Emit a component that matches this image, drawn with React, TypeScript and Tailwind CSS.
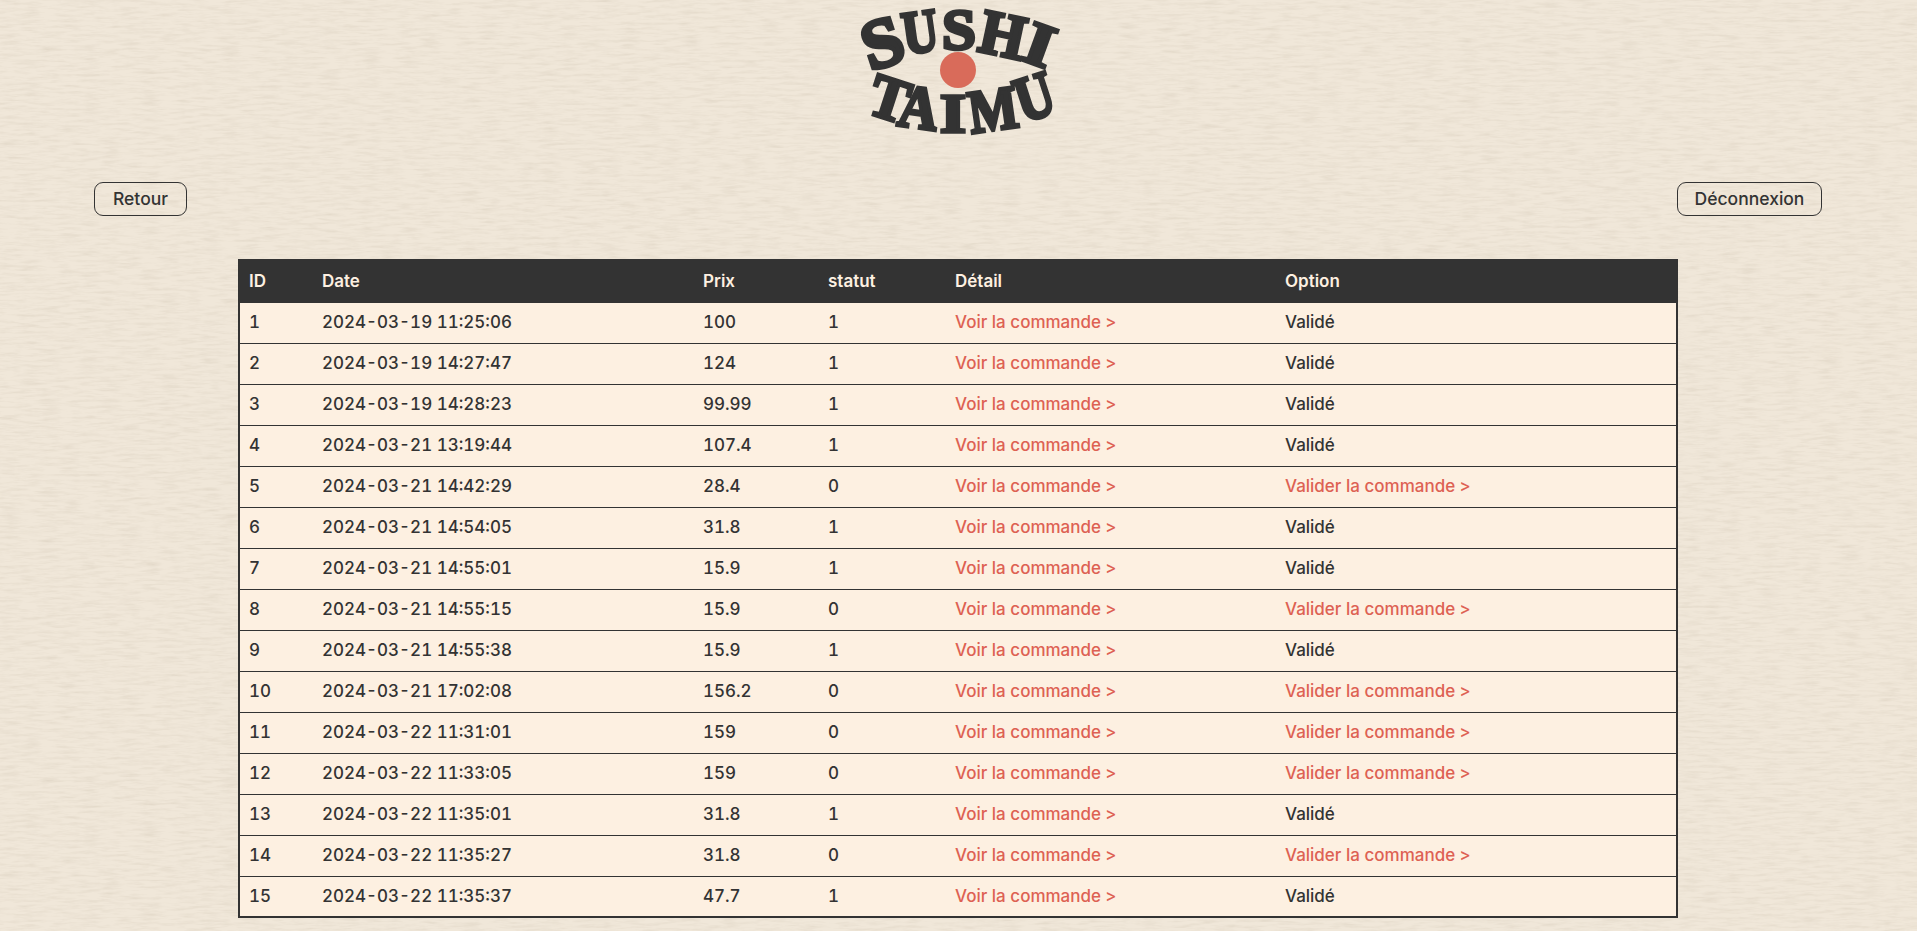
const orders = [
  { id: 1, date: "2024-03-19 11:25:06", prix: "100", statut: 1 },
  { id: 2, date: "2024-03-19 14:27:47", prix: "124", statut: 1 },
  { id: 3, date: "2024-03-19 14:28:23", prix: "99.99", statut: 1 },
  { id: 4, date: "2024-03-21 13:19:44", prix: "107.4", statut: 1 },
  { id: 5, date: "2024-03-21 14:42:29", prix: "28.4", statut: 0 },
  { id: 6, date: "2024-03-21 14:54:05", prix: "31.8", statut: 1 },
  { id: 7, date: "2024-03-21 14:55:01", prix: "15.9", statut: 1 },
  { id: 8, date: "2024-03-21 14:55:15", prix: "15.9", statut: 0 },
  { id: 9, date: "2024-03-21 14:55:38", prix: "15.9", statut: 1 },
  { id: 10, date: "2024-03-21 17:02:08", prix: "156.2", statut: 0 },
  { id: 11, date: "2024-03-22 11:31:01", prix: "159", statut: 0 },
  { id: 12, date: "2024-03-22 11:33:05", prix: "159", statut: 0 },
  { id: 13, date: "2024-03-22 11:35:01", prix: "31.8", statut: 1 },
  { id: 14, date: "2024-03-22 11:35:27", prix: "31.8", statut: 0 },
  { id: 15, date: "2024-03-22 11:35:37", prix: "47.7", statut: 1 },
];

const headers = ["ID", "Date", "Prix", "statut", "Détail", "Option"];

// logo letters: centre x/y in page pixels, rotation, x and y stretch
const letters = [
  { ch: "S", x: 883, y: 41, r: -18, sx: 1.25, sy: 1.2 },
  { ch: "U", x: 921, y: 30, r: -8, sx: 0.85, sy: 1.05 },
  { ch: "S", x: 960, y: 28, r: 0, sx: 1.05, sy: 1.0 },
  { ch: "H", x: 1004, y: 33, r: 12, sx: 1.0, sy: 1.08 },
  { ch: "I", x: 1041, y: 43, r: 20, sx: 1.25, sy: 1.05 },
  { ch: "T", x: 891, y: 97, r: 18, sx: 1.0, sy: 1.05 },
  { ch: "A", x: 920, y: 106, r: 8, sx: 0.95, sy: 1.05 },
  { ch: "I", x: 954, y: 112, r: 0, sx: 1.15, sy: 0.95 },
  { ch: "M", x: 994, y: 108, r: -8, sx: 0.9, sy: 1.05 },
  { ch: "U", x: 1035, y: 95, r: -18, sx: 0.9, sy: 1.1 },
];

function Logo() {
  return (
    <svg width="200" height="130" viewBox="860 4 200 130" className="block mx-auto overflow-visible">
      {letters.map((l, i) => (
        <text
          key={i}
          transform={`translate(${l.x} ${l.y}) rotate(${l.r}) scale(${l.sx} ${l.sy})`}
          y="20"
          textAnchor="middle"
          fill="#333"
          stroke="#333"
          strokeWidth="3.5"
          fontFamily="'Liberation Serif', serif"
          fontWeight="700"
          fontSize="58"
        >
          {l.ch}
        </text>
      ))}
      <circle cx="959" cy="69" r="18" fill="#d96b5a" />
    </svg>
  );
}

function PaperGrain() {
  return (
    <svg className="absolute inset-0 w-full h-full pointer-events-none">
      <filter id="paper-grain">
        <feTurbulence type="fractalNoise" baseFrequency="0.05 0.35" numOctaves="4" seed="11" />
        <feColorMatrix values="0 0 0 0 0.42  0 0 0 0 0.35  0 0 0 0 0.25  0.22 0.22 0 0 -0.19" />
      </filter>
      <rect width="100%" height="100%" filter="url(#paper-grain)" />
    </svg>
  );
}

export default function App() {
  return (
    <div className="relative min-h-[931px] bg-[#f0e7d9] pt-[5px] text-[#333] font-['Inter','Liberation_Sans',sans-serif] overflow-hidden">
      <PaperGrain />
      <div className="relative">
        <Logo />
        <div className="flex justify-between pl-[94px] pr-[95px] mt-[47px]">
          <button className="w-[93px] h-[34px] pt-px border border-[#333] rounded-[9px] text-[17.5px] font-medium">Retour</button>
          <button className="w-[145px] h-[34px] pt-px border border-[#333] rounded-[9px] text-[17.5px] font-medium">Déconnexion</button>
        </div>
        <table className="w-[1438px] ml-[238px] mt-[43px] table-fixed border-collapse bg-[#fdf0e1] border-2 border-[#333] text-[17px] font-medium tabular-nums">
          <colgroup>
            <col className="w-[74px]" />
            <col className="w-[381px]" />
            <col className="w-[125px]" />
            <col className="w-[127px]" />
            <col className="w-[330px]" />
            <col className="w-[401px]" />
          </colgroup>
          <thead>
            <tr className="h-[42px] bg-[#333] text-[#fdf0e1]">
              {headers.map((h) => (
                <th key={h} className="pl-[9px] pr-2.5 text-left font-semibold">{h}</th>
              ))}
            </tr>
          </thead>
          <tbody>
            {orders.map((o) => (
              <tr key={o.id} className="h-[41px] border-t border-[#333]">
                <td className="pl-[9px] pr-2.5">{o.id}</td>
                <td className="pl-[9px] pr-2.5">{o.date}</td>
                <td className="pl-[9px] pr-2.5">{o.prix}</td>
                <td className="pl-[9px] pr-2.5">{o.statut}</td>
                <td className="pl-[9px] pr-2.5 text-[#dd6153]">Voir la commande &gt;</td>
                {o.statut === 1 ? (
                  <td className="pl-[9px] pr-2.5">Validé</td>
                ) : (
                  <td className="pl-[9px] pr-2.5 text-[#dd6153]">Valider la commande &gt;</td>
                )}
              </tr>
            ))}
          </tbody>
        </table>
      </div>
    </div>
  );
}
